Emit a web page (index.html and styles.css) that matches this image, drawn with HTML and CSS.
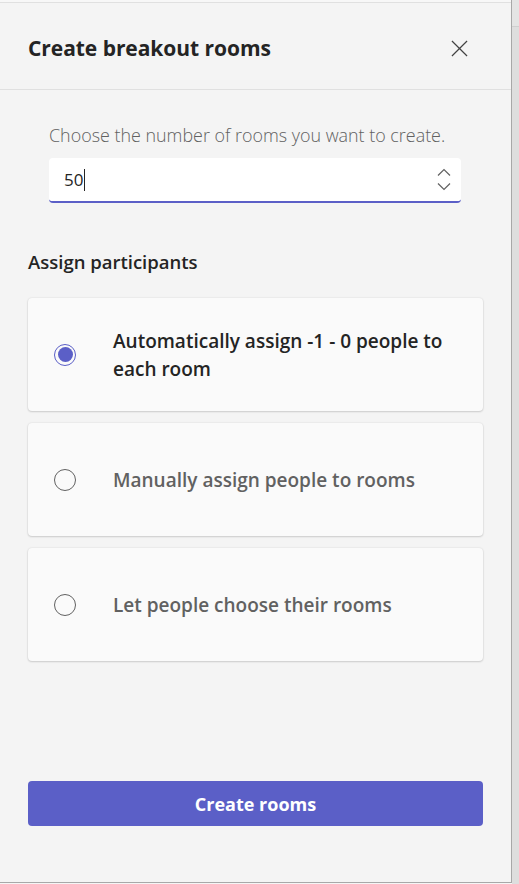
FILE: index.html
```html
<!DOCTYPE html>
<html>
<head>
<meta charset="utf-8">
<link rel="stylesheet" href="styles.css">
</head>
<body>
<div class="frame">
  <div class="panel">
    <div class="topline"></div>
    <header class="header">
      <h1 class="title">Create breakout rooms</h1>
      <button class="close" aria-label="Close">
        <svg width="18" height="18" viewBox="0 0 18 18"><path d="M1 1 L17 17 M17 1 L1 17" stroke="#424242" stroke-width="1.3" fill="none"/></svg>
      </button>
    </header>
    <div class="content">
      <div class="count">
        <p class="count-label">Choose the number of rooms you want to create.</p>
        <div class="input">
          <span class="value">50</span><span class="caret"></span>
          <div class="spin">
            <svg width="14" height="9" viewBox="0 0 14 9"><path d="M1 7.5 L7 1.5 L13 7.5" stroke="#616161" stroke-width="1.2" fill="none"/></svg>
            <svg width="14" height="9" viewBox="0 0 14 9"><path d="M1 1.5 L7 7.5 L13 1.5" stroke="#616161" stroke-width="1.2" fill="none"/></svg>
          </div>
        </div>
      </div>
      <h2 class="section">Assign participants</h2>
      <div class="options">
        <div class="card">
          <span class="radio checked"><span class="dot"></span></span>
          <span class="label active">Automatically assign -1 - 0 people to each room</span>
        </div>
        <div class="card">
          <span class="radio"></span>
          <span class="label">Manually assign people to rooms</span>
        </div>
        <div class="card">
          <span class="radio"></span>
          <span class="label">Let people choose their rooms</span>
        </div>
      </div>
      <div class="spacer"></div>
      <button class="primary">Create rooms</button>
    </div>
  </div>
  <div class="strip"><div class="strip-top"></div></div>
</div>
</body>
</html>
```

FILE: styles.css
```css
* { box-sizing: border-box; }
html, body { margin: 0; padding: 0; }
body {
  width: 519px;
  height: 884px;
  overflow: hidden;
  font-family: "Open Sans", "Noto Sans", sans-serif;
  background: #f5f5f5;
}
.frame {
  display: flex;
  height: 884px;
}
.panel {
  width: 512px;
  height: 883px;
  background: #f4f4f4;
  border-right: 1px solid #a8a8a8;
  border-bottom: 1px solid #a8a8a8;
  display: flex;
  flex-direction: column;
}
.topline {
  height: 3px;
  border-bottom: 1px solid #e0e0e0;
  background: #f7f7f7;
}
.header {
  height: 87px;
  border-bottom: 1px solid #e0e0e0;
  display: flex;
  align-items: center;
  justify-content: space-between;
  padding: 4px 43px 0 28px;
}
.title {
  margin: 0;
  font-size: 21px;
  font-weight: 700;
  color: #242424;
  letter-spacing: -0.05px;
}
.close {
  border: 0;
  background: none;
  padding: 0;
  width: 17px;
  height: 17px;
  display: flex;
}
.close svg { width: 17px; height: 17px; }
.content {
  flex: 1;
  display: flex;
  flex-direction: column;
  padding: 0 28px 56px 28px;
}
.count {
  padding: 33px 22px 0 21px;
}
.count-label {
  margin: 0 0 11px 0;
  font-size: 17.9px;
  font-weight: 300;
  color: #616161;
  line-height: 24px;
  white-space: nowrap;
}
.input {
  height: 45px;
  background: #fff;
  border-radius: 4px;
  border-bottom: 2px solid #5b5fc7;
  display: flex;
  align-items: center;
  padding: 0 10px 0 15px;
}
.value {
  font-size: 17px;
  color: #242424;
}
.caret {
  width: 1px;
  height: 22px;
  background: #242424;
  margin-left: 1px;
}
.spin {
  margin-left: auto;
  display: flex;
  flex-direction: column;
  gap: 5px;
}
.section {
  margin: 47px 0 24px 0;
  font-size: 18.5px;
  font-weight: 600;
  color: #242424;
  line-height: 24px;
}
.options {
  display: flex;
  flex-direction: column;
  gap: 12px;
}
.card {
  height: 113px;
  background: #fafafa;
  border-radius: 4px;
  box-shadow: 0 0 2px rgba(0,0,0,0.12), 0 1px 2px rgba(0,0,0,0.14);
  display: flex;
  align-items: center;
  padding: 0 30px 0 26px;
}
.radio {
  flex: none;
  width: 22px;
  height: 22px;
  border-radius: 50%;
  border: 1px solid #616161;
  display: flex;
  align-items: center;
  justify-content: center;
  margin-right: 37px;
}
.radio.checked {
  border-color: #5b5fc7;
}
.dot {
  width: 15px;
  height: 15px;
  border-radius: 50%;
  background: #5b5fc7;
}
.label {
  font-size: 19px;
  font-weight: 600;
  color: #616161;
  line-height: 28px;
}
.label.active {
  color: #242424;
}
.spacer { flex: 1; }
.primary {
  height: 45px;
  border: 0;
  border-radius: 4px;
  background: #5b5fc7;
  color: #fff;
  font-family: inherit;
  font-size: 18px;
  font-weight: 700;
}
.strip {
  flex: 1;
  background: #dedede;
}
.strip-top {
  height: 27px;
  border-bottom: 1px solid #cfcfcf;
  background: #e4e4e4;
}
```
